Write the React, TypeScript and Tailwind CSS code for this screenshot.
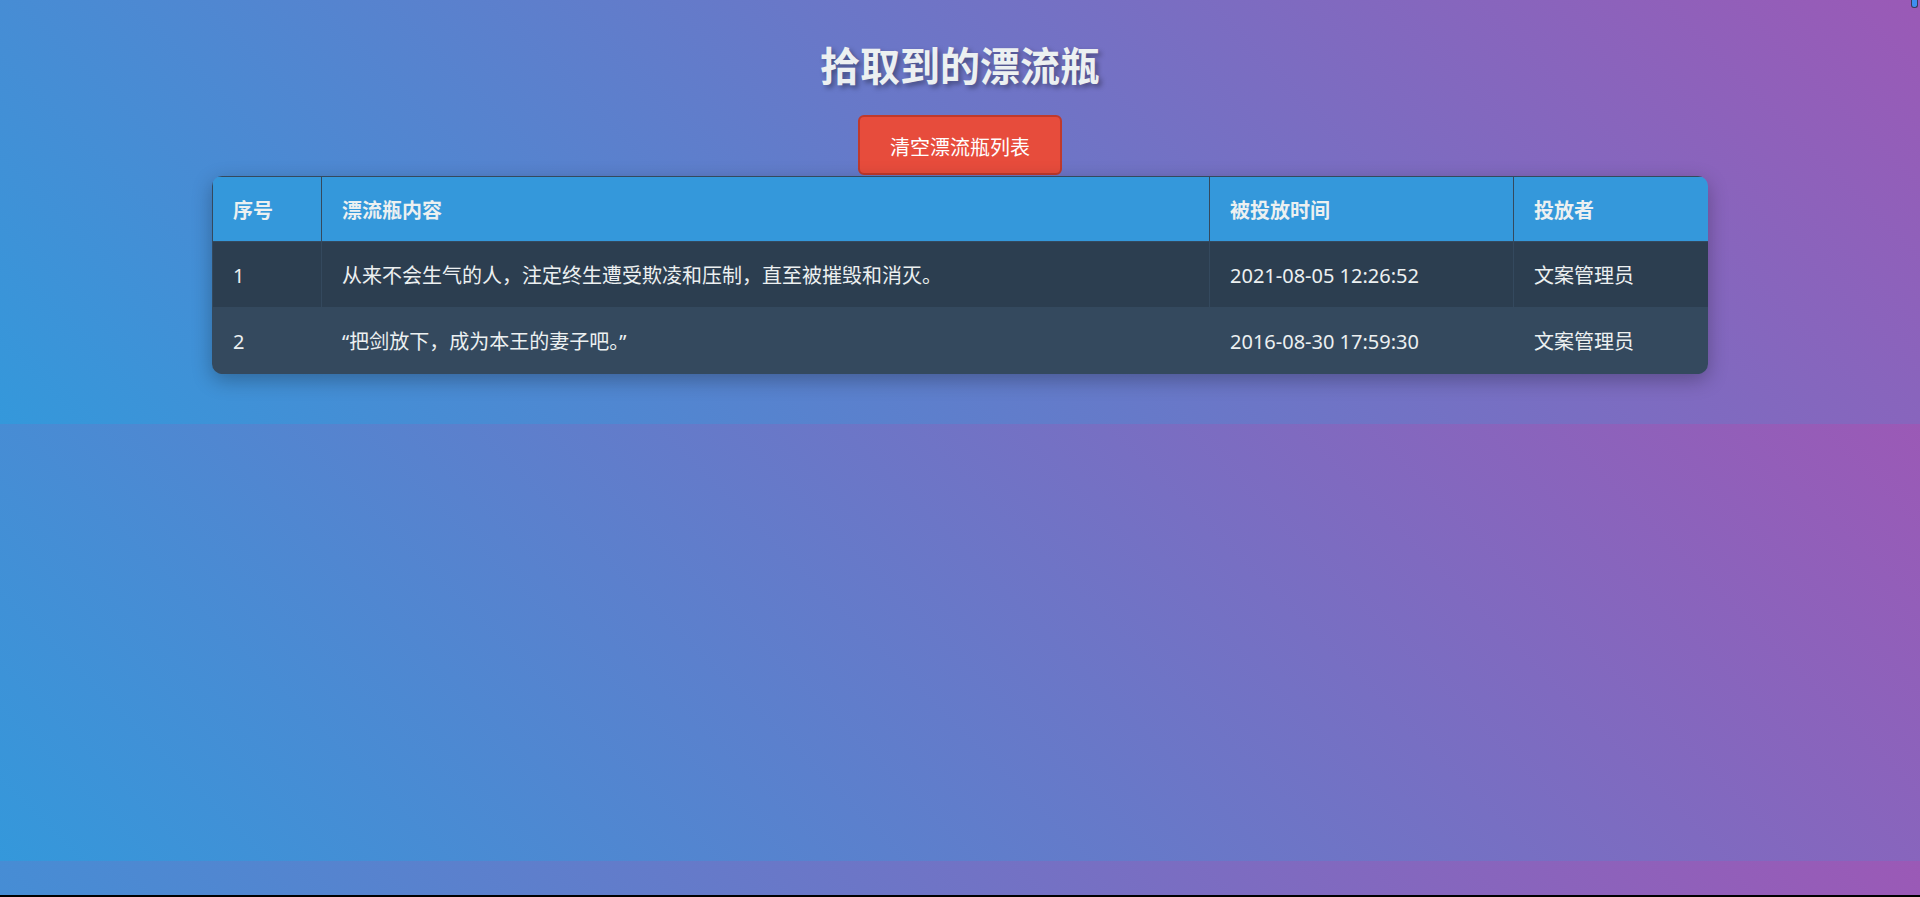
const bottles = [
  {
    id: 1,
    content: '从来不会生气的人，注定终生遭受欺凌和压制，直至被摧毁和消灭。',
    time: '2021-08-05 12:26:52',
    author: '文案管理员',
  },
  {
    id: 2,
    content: '“把剑放下，成为本王的妻子吧。”',
    time: '2016-08-30 17:59:30',
    author: '文案管理员',
  },
];

const font = "font-['Noto_Sans','Noto_Sans_CJK_SC',sans-serif]";

export default function App() {
  return (
    <div
      className={`relative flex h-[897px] w-full flex-col bg-[linear-gradient(45deg,#3498db,#9b59b6)] bg-[length:100%_437px] bg-[position:0_-13px] text-[#ecf0f1] ${font}`}
    >
      <span className="absolute top-0 right-[2px] h-[8px] w-[7px] rounded-b-[3px] border border-t-0 border-[#3a3a5a] bg-[#3d8ef0]" />

      <main className="flex flex-1 flex-col items-center pt-[40px]">
        <h1 className="text-[40px] leading-[52px] font-bold [text-shadow:3px_3px_5px_rgba(0,0,0,0.35)]">
          拾取到的漂流瓶
        </h1>

        <button className="mt-[23px] rounded-[6px] border-2 border-[#c0392b] bg-[#e74c3c] px-[30px] pt-[18px] pb-[12px] text-[20px] leading-[26px] text-white">
          清空漂流瓶列表
        </button>

        <div className="mt-px w-[1496px] overflow-hidden rounded-[10px] shadow-[0_6px_20px_rgba(0,0,0,0.28)]">
          <table className="w-full table-fixed border-collapse text-left text-[20px] leading-[26px]">
            <colgroup>
              <col className="w-[109px]" />
              <col className="w-[888px]" />
              <col className="w-[304px]" />
              <col className="w-[195px]" />
            </colgroup>
            <thead>
              <tr className="bg-[#3498db]">
                {['序号', '漂流瓶内容', '被投放时间', '投放者'].map((h) => (
                  <th
                    key={h}
                    className="h-[65px] border border-[#34495e] px-[20px] pt-[4px] font-bold"
                  >
                    {h}
                  </th>
                ))}
              </tr>
            </thead>
            <tbody>
              {bottles.map((b, i) => (
                <tr
                  key={b.id}
                  className={i % 2 === 0 ? 'bg-[#2c3e50]' : 'bg-[#34495e]'}
                >
                  <td className="h-[66px] border border-[#34495e] px-[20px] pt-[2px]">{b.id}</td>
                  <td className="border border-[#34495e] px-[20px] pt-[2px]">{b.content}</td>
                  <td className="border border-[#34495e] px-[20px] pt-[2px]">{b.time}</td>
                  <td className="border border-[#34495e] px-[20px] pt-[2px]">{b.author}</td>
                </tr>
              ))}
            </tbody>
          </table>
        </div>
      </main>

      <div className="h-[2px] w-full bg-black" />
    </div>
  );
}
